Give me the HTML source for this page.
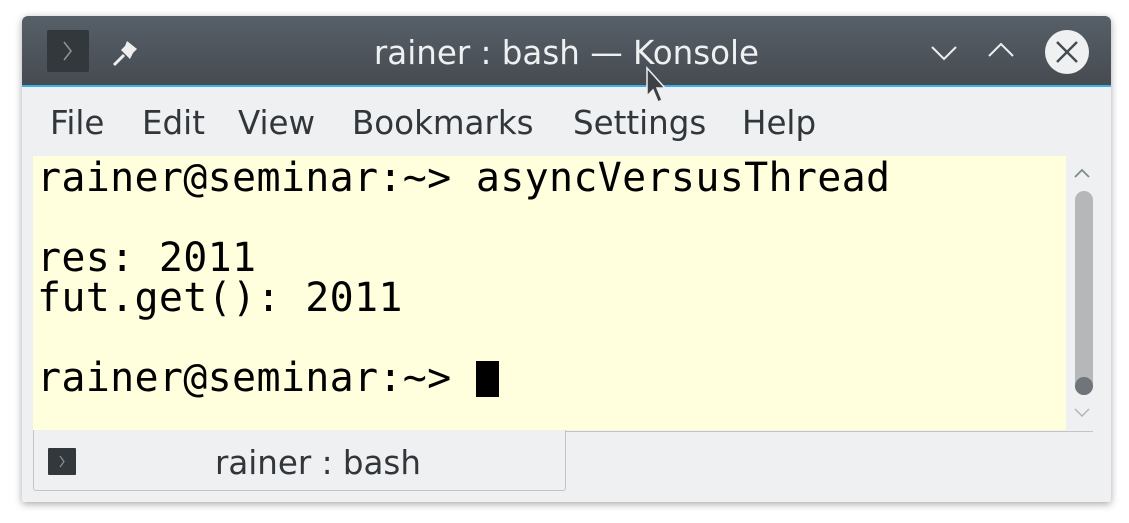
<!DOCTYPE html>
<html><head><meta charset="utf-8"><style>
*{margin:0;padding:0;box-sizing:border-box}
body{width:1129px;height:523px;background:#fff;position:relative;overflow:hidden;font-family:"DejaVu Sans","Liberation Sans",sans-serif}
.win{position:absolute;left:22px;top:16px;width:1089px;height:486px;background:#eff0f1;border-radius:6px 6px 2px 2px;box-shadow:0 2px 8px rgba(0,0,0,.35);overflow:hidden}
.title{position:absolute;left:0;top:0;width:100%;height:71px;background:linear-gradient(#575f68,#464b51);border-bottom:2px solid #3daee9}
.ttext{position:absolute;left:0;width:100%;top:18px;text-align:center;color:#eff0f1;font-size:32.5px}
.menu span{position:absolute;top:88px;font-size:32.5px;color:#31363b}
.term{position:absolute;left:11px;top:140px;width:1033px;height:274px;background:#ffffdd;font-family:"DejaVu Sans Mono","Liberation Mono",monospace;font-size:40px;line-height:40px;color:#000;padding:2px 0 0 4px;white-space:pre;letter-spacing:0.3px}
.cur{display:inline-block;width:23px;height:36px;background:#000;vertical-align:-6px}
.sep{position:absolute;left:11px;top:415px;width:1060px;height:1px;background:#c2c4c6}
.tab{position:absolute;left:11px;top:414px;width:533px;height:61px;border:1px solid #c2c4c6;border-top:none;border-radius:0 0 3px 3px;background:#eff0f1}
.tab .t{position:absolute;left:181px;top:14px;font-size:32.5px;color:#31363b}
</style></head><body>
<div class="win">
 <div class="title">
  <div style="position:absolute;left:25px;top:14px;width:42px;height:42px;background:#32383c;border-radius:2px"><svg width="42" height="42"><path d="M17 12 L24 21 L17 30" stroke="#8a9096" stroke-width="1.6" fill="none"/></svg></div>
  <svg style="position:absolute;left:88px;top:22px" width="32" height="30"><path d="M4 27 L14 17" stroke="#eee" stroke-width="3"/><path d="M11 12 L20 21 L23 15 L27 11 L17 3 L15 8 Z" fill="#eee"/></svg>
  <div class="ttext">rainer : bash — Konsole</div>
  <svg style="position:absolute;left:908px;top:28px" width="30" height="18"><path d="M2 3 L14 15 L26 3" stroke="#eee" stroke-width="2" fill="none"/></svg>
  <svg style="position:absolute;left:965px;top:25px" width="30" height="18"><path d="M2 15 L14 3 L26 15" stroke="#eee" stroke-width="2" fill="none"/></svg>
  <svg style="position:absolute;left:1022px;top:13px" width="46" height="46"><circle cx="23" cy="23" r="22" fill="#eff0f1"/><path d="M13 13 L33 33 M33 13 L13 33" stroke="#454a50" stroke-width="2.4"/></svg>
 </div>
 <svg style="position:absolute;left:622px;top:50px" width="26" height="40"><path d="M3 2 L3 30 L9 24 L14 36 L18 34 L13 22 L21 22 Z" fill="#3d4146" stroke="#eee" stroke-width="1.5"/></svg>
 <div class="menu"><span style="left:28px">File</span><span style="left:120px">Edit</span><span style="left:216px">View</span><span style="left:330px">Bookmarks</span><span style="left:551px">Settings</span><span style="left:720px">Help</span></div>
 <div class="term">rainer@seminar:~&gt; asyncVersusThread

res: 2011
fut.get(): 2011

rainer@seminar:~&gt; <span class="cur"></span></div>
 <svg style="position:absolute;left:1050px;top:150px" width="20" height="14"><path d="M3 11 L10 4 L17 11" stroke="#7f8c8d" stroke-width="1.8" fill="none"/></svg>
 <div style="position:absolute;left:1053px;top:175px;width:18px;height:204px;background:#b5b7b9;border-radius:9px"></div>
 <div style="position:absolute;left:1053px;top:361px;width:18px;height:18px;background:#70757b;border-radius:9px"></div>
 <svg style="position:absolute;left:1050px;top:390px" width="20" height="14"><path d="M3 3 L10 10 L17 3" stroke="#b0b4b7" stroke-width="1.4" fill="none"/></svg>
 <div class="sep"></div>
 <div class="tab">
  <div style="position:absolute;left:14px;top:18px;width:28px;height:27px;background:#32383c;border-radius:1px"><svg width="28" height="27"><path d="M12 8 L16 13.5 L12 19" stroke="#8a9096" stroke-width="1.2" fill="none"/></svg></div>
  <div class="t">rainer : bash</div>
 </div>
</div>
</body></html>
